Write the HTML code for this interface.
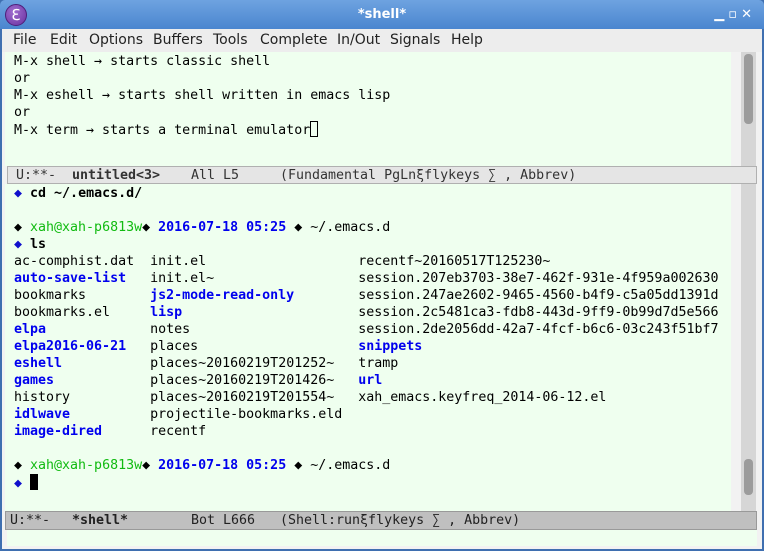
<!DOCTYPE html>
<html><head><meta charset="utf-8"><style>
*{margin:0;padding:0;box-sizing:border-box}
body{width:764px;height:551px;overflow:hidden;background:#3f6fb0;position:relative;font-family:"DejaVu Sans Mono","Liberation Mono",monospace}
#title{position:absolute;left:0;top:0;width:764px;height:29px;background:linear-gradient(#6ea3e0,#4a86cf);border-radius:5px 5px 0 0;color:#fff;font-family:"DejaVu Sans","Liberation Sans",sans-serif;font-size:13px;font-weight:bold;text-align:center;line-height:29px}
#logo{position:absolute;left:5px;top:4px;width:22px;height:22px;border-radius:50%;background:radial-gradient(circle at 40% 35%,#a06fd0,#6a2f9e);border:1px solid #4e1f7a;color:#fff;font-size:15px;line-height:20px;text-align:center;font-weight:normal}
#btns{position:absolute;right:8px;top:0;color:#fff;font-size:13px;letter-spacing:4px}
#menu{position:absolute;left:2px;top:29px;width:760px;height:23px;background:#ededed;font-family:"DejaVu Sans","Liberation Sans",sans-serif;font-size:14px;color:#222;line-height:23px}
#menu span{position:absolute;top:0}
#main{position:absolute;left:2px;top:52px;width:760px;height:497px;background:#f2f2f2}
.win{position:absolute;left:5px;width:726px;background:#efffef}
.t{position:absolute;left:14px;font-size:13.3px;line-height:17px;white-space:pre;color:#000}
.sb{position:absolute;left:741px;width:15px;background:#d6d6d6}
.th{position:absolute;left:744px;width:9px;background:#9c9c9c;border-radius:4px}
.ml{position:absolute;width:752px;height:18px;font-size:13.3px;line-height:17px;white-space:pre}
.ml span{position:absolute;top:0}
b{font-weight:bold}
.bl{color:#0000ee;font-weight:bold}
.gr{color:#11bb11}
.dm{color:#1010cc}
</style></head><body>
<div id="title"><div id="logo">ℇ</div>*shell*<div id="btns">▁▫✕</div></div>
<div id="menu"><span style="left:11px">File</span><span style="left:48px">Edit</span><span style="left:87px">Options</span><span style="left:151px">Buffers</span><span style="left:211px">Tools</span><span style="left:258px">Complete</span><span style="left:335px">In/Out</span><span style="left:388px">Signals</span><span style="left:449px">Help</span></div>
<div id="main"></div>
<div class="win" style="top:52px;height:114px"></div>
<div class="sb" style="top:52px;height:114px"></div>
<div class="th" style="top:54px;height:70px"></div>
<div class="t" style="top:53px">M-x shell → starts classic shell
or
M-x eshell → starts shell written in emacs lisp
or
M-x term → starts a terminal emulator<span style="display:inline-block;width:8px;height:16px;border:1px solid #000;vertical-align:-3px"></span></div>
<div class="ml" style="left:7px;width:750px;top:166px;background:#e5e5e5;border:1px solid #b0b0b0;color:#333"><span style="left:8px">U:**-</span><span style="left:64px"><b>untitled&lt;3&gt;</b></span><span style="left:183px">All L5</span><span style="left:272px">(Fundamental PgLnξflykeys ∑ , Abbrev)</span></div>
<div class="win" style="top:184px;height:327px"></div>
<div class="sb" style="top:184px;height:327px"></div>
<div class="th" style="top:459px;height:36px"></div>
<div class="t" style="top:185px"><span class="dm">◆</span> <b>cd ~/.emacs.d/</b>

◆ <span class="gr">xah@xah-p6813w</span>◆ <span class="bl">2016-07-18 05:25</span> ◆ ~/.emacs.d
<span class="dm">◆</span> <b>ls</b>
ac-comphist.dat  init.el                   recentf~20160517T125230~
<span class="bl">auto-save-list</span>   init.el~                  session.207eb3703-38e7-462f-931e-4f959a002630
bookmarks        <span class="bl">js2-mode-read-only</span>        session.247ae2602-9465-4560-b4f9-c5a05dd1391d
bookmarks.el     <span class="bl">lisp</span>                      session.2c5481ca3-fdb8-443d-9ff9-0b99d7d5e566
<span class="bl">elpa</span>             notes                     session.2de2056dd-42a7-4fcf-b6c6-03c243f51bf7
<span class="bl">elpa2016-06-21</span>   places                    <span class="bl">snippets</span>
<span class="bl">eshell</span>           places~20160219T201252~   tramp
<span class="bl">games</span>            places~20160219T201426~   <span class="bl">url</span>
history          places~20160219T201554~   xah_emacs.keyfreq_2014-06-12.el
<span class="bl">idlwave</span>          projectile-bookmarks.eld
<span class="bl">image-dired</span>      recentf

◆ <span class="gr">xah@xah-p6813w</span>◆ <span class="bl">2016-07-18 05:25</span> ◆ ~/.emacs.d
<span class="dm">◆</span> <span style="display:inline-block;width:8px;height:16px;background:#000;vertical-align:-3px"></span></div>
<div class="ml" style="left:5px;top:511px;height:19px;line-height:18px;background:#bfbfbf;border:1px solid #999;color:#222"><span style="left:4px">U:**-</span><span style="left:66px"><b>*shell*</b></span><span style="left:185px">Bot L666</span><span style="left:274px">(Shell:runξflykeys ∑ , Abbrev)</span></div>
<div class="win" style="top:530px;height:16px;left:7px;width:750px"></div>
</body></html>
